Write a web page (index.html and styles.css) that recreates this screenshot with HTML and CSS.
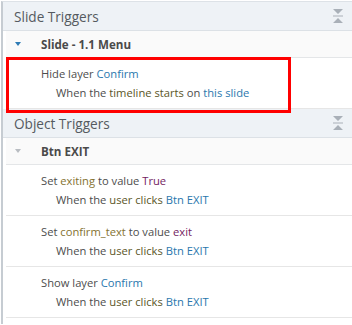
FILE: index.html
```html
<!DOCTYPE html>
<html>
<head>
<meta charset="utf-8">
<link rel="stylesheet" href="styles.css">
</head>
<body>
<div class="panel">
  <div class="header">
    <span class="title">Slide Triggers</span>
    <svg class="collapse" width="10" height="14" viewBox="0 0 10 14"><path d="M0 0H10L5 5Z M0 6.5H10V7.5H0Z M0 14H10L5 9Z" fill="#a9b0b8"/></svg>
  </div>
  <div class="group"><span class="tri blue"></span><span class="gname">Slide - 1.1 Menu</span></div>
  <div class="item">
    <div class="l1">Hide layer <span class="obj">Confirm</span></div>
    <div class="l2">When the <span class="ev">timeline starts</span> on <span class="obj">this slide</span></div>
    <div class="highlight"></div>
  </div>
  <div class="header">
    <span class="title">Object Triggers</span>
    <svg class="collapse" width="10" height="14" viewBox="0 0 10 14"><path d="M0 0H10L5 5Z M0 6.5H10V7.5H0Z M0 14H10L5 9Z" fill="#a9b0b8"/></svg>
  </div>
  <div class="group"><span class="tri gray"></span><span class="gname">Btn EXIT</span></div>
  <div class="item">
    <div class="l1">Set <span class="var">exiting</span> to value <span class="val">True</span></div>
    <div class="l2">When the <span class="ev">user clicks</span> <span class="obj">Btn EXIT</span></div>
  </div>
  <div class="item">
    <div class="l1">Set <span class="var">confirm_text</span> to value <span class="val">exit</span></div>
    <div class="l2">When the <span class="ev">user clicks</span> <span class="obj">Btn EXIT</span></div>
  </div>
  <div class="item">
    <div class="l1">Show layer <span class="obj">Confirm</span></div>
    <div class="l2">When the <span class="ev">user clicks</span> <span class="obj">Btn EXIT</span></div>
  </div>
</div>
</body>
</html>
```
FILE: styles.css
```css
html, body {
  margin: 0;
  padding: 0;
  background: #ffffff;
}
body {
  font-family: "Open Sans", "Noto Sans", sans-serif;
  color: #4d4d4d;
  height: 325px;
  overflow: hidden;
}
.panel {
  margin: 1px 0 0 1px;
  border-top: 1px solid #dde2e7;
  border-left: 2px solid #c6ccd2;
  height: 322px;
}
.header {
  height: 28px;
  background: #eef2f6;
  border-bottom: 1px solid #dce1e6;
  display: flex;
  align-items: center;
  justify-content: space-between;
  padding: 0 9px 0 11px;
}
.title {
  font-size: 13.6px;
  color: #555a60;
}
.collapse {
  display: block;
}
.group {
  height: 26px;
  background: #fafafa;
  border-bottom: 1px solid #e4e6e8;
  margin-left: 3px;
  display: flex;
  align-items: center;
}
.tri {
  width: 0;
  height: 0;
  border-left: 3px solid transparent;
  border-right: 3px solid transparent;
  border-top: 4px solid #2e7bb5;
  margin-left: 9px;
  margin-right: 20px;
}
.tri.gray {
  border-top-color: #b9bdc2;
}
.gname {
  font-size: 11.6px;
  font-weight: bold;
  color: #4a4a4a;
}
.item {
  position: relative;
  border-bottom: 1px solid #e6e6e6;
  margin-left: 3px;
  font-size: 11.2px;
  display: flex;
  flex-direction: column;
  padding-left: 35px;
  box-sizing: border-box;
  height: 51px;
}
.l1 {
  margin-top: 6px;
  line-height: 19px;
}
.l2 {
  padding-left: 15px;
  line-height: 19px;
}
.obj { color: #2a77ad; }
.ev { color: #5a5526; }
.var { color: #847230; }
.val { color: #74235f; }
.highlight {
  position: absolute;
  left: 0;
  top: -1px;
  width: 285px;
  height: 56px;
  box-sizing: border-box;
  border: 3px solid #ff0000;
}
```
